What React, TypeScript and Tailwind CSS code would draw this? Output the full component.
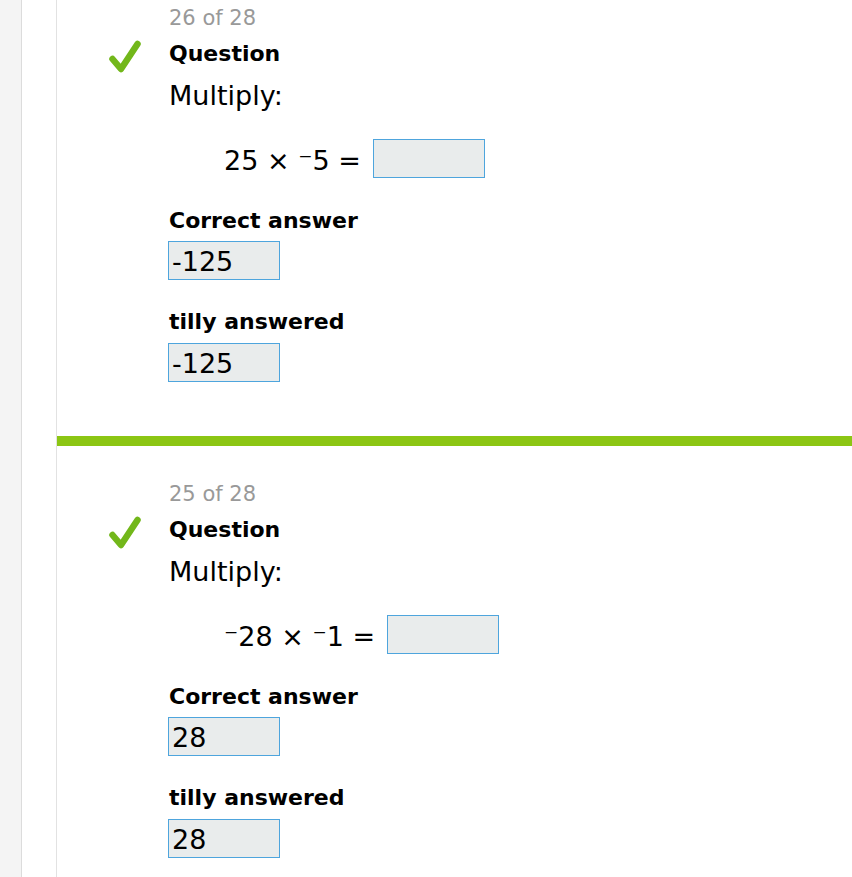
import React from 'react';

interface QuestionItem {
  index: number;
  total: number;
  equation: string;
  correct: string;
  answered: string;
  student: string;
}

const items: QuestionItem[] = [
  { index: 26, total: 28, equation: '25 × ⁻5 =', correct: '-125', answered: '-125', student: 'tilly' },
  { index: 25, total: 28, equation: '⁻28 × ⁻1 =', correct: '28', answered: '28', student: 'tilly' },
];

function CheckMark() {
  return (
    <svg width="32" height="33" viewBox="0 0 32 33" fill="none">
      <path
        d="M3.5 19 L12 29 L28.5 4"
        stroke="#72b71a"
        strokeWidth="6.5"
        strokeLinecap="round"
        strokeLinejoin="round"
      />
    </svg>
  );
}

function AnswerBox({ value }: { value: string }) {
  return (
    <div className="w-[112px] h-[39px] border border-[#4ea5dd] bg-[#e9ecec] pl-[3px] pt-[4px] text-[27px] leading-[32px] text-black">
      {value}
    </div>
  );
}

function QuestionBlock({ item, first }: { item: QuestionItem; first: boolean }) {
  return (
    <div className={first ? 'pt-[6px] pb-[54px]' : 'pt-[36px] pb-[54px]'}>
      <div className="pl-[112px] text-[21px] leading-[24px] text-[#999999]">
        {item.index} of {item.total}
      </div>
      <div className="flex mt-[8px]">
        <div className="w-[112px] shrink-0 pl-[52px] pt-[2px]">
          <CheckMark />
        </div>
        <div className="flex-1">
          <div className="mt-[3px] text-[22px] leading-[26px] font-bold text-black">Question</div>
          <div className="mt-[13px] text-[27px] leading-[32px] text-black">Multiply:</div>
          <div className="mt-[27px] flex items-start">
            <div className="ml-[55px] mt-[6px] mr-[12px] text-[27px] leading-[32px] text-black whitespace-pre">
              {item.equation}
            </div>
            <div className="w-[112px] h-[39px] border border-[#4ea5dd] bg-[#e9ecec]" />
          </div>
          <div className="mt-[30px] text-[22px] leading-[26px] font-bold text-black">Correct answer</div>
          <div className="mt-[7px] -ml-[1px]">
            <AnswerBox value={item.correct} />
          </div>
          <div className="mt-[29px] text-[22px] leading-[26px] font-bold text-black">
            {item.student} answered
          </div>
          <div className="mt-[8px] -ml-[1px]">
            <AnswerBox value={item.answered} />
          </div>
        </div>
      </div>
    </div>
  );
}

export default function App() {
  return (
    <div className="flex min-h-screen bg-white font-['DejaVu_Sans',Verdana,sans-serif]">
      <div className="w-[22px] shrink-0 bg-[#f4f4f4] border-r border-[#dcdcdc]" />
      <div className="w-[35px] shrink-0 bg-white border-r border-[#e2e2e2]" />
      <div className="flex-1 overflow-hidden">
        {items.map((item, i) => (
          <div key={item.index}>
            {i > 0 && <div className="h-[10px] bg-[#8cc614]" />}
            <QuestionBlock item={item} first={i === 0} />
          </div>
        ))}
      </div>
    </div>
  );
}
